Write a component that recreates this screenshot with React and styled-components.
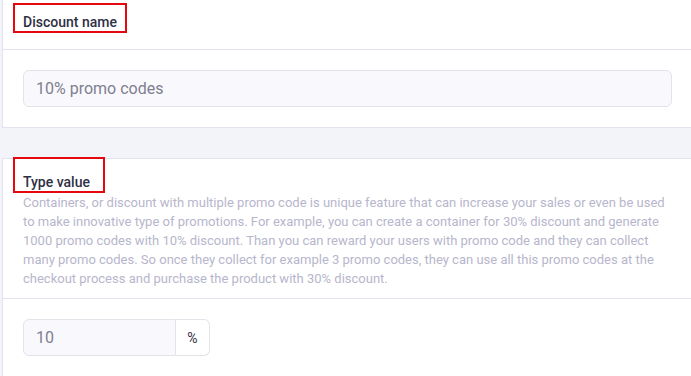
import styled, { createGlobalStyle } from "styled-components";

const GlobalStyle = createGlobalStyle`
  html, body {
    margin: 0;
    padding: 0;
    background: #f3f4f9;
    overflow: hidden;
  }
  body {
    font-family: Roboto, "Liberation Sans", sans-serif;
  }
`;

const Page = styled.div`
  display: flex;
  flex-direction: column;
  gap: 30px;
  padding-left: 2px;
  margin-right: -2px;
`;

const Card = styled.div`
  background: #fff;
  border: 1px solid #e3e3ef;
  border-top: ${(props) => (props.$open ? "none" : "1px solid #e3e3ef")};
`;

const CardHeader = styled.div`
  padding: ${(props) => props.$pad};
  border-bottom: 1px solid #e3e3ef;
`;

// red outline marks the annotated field titles
const Title = styled.h3`
  display: inline-block;
  margin: ${(props) => props.$offset} 0 0 -10px;
  padding: ${(props) => props.$top}px ${(props) => props.$right}px 1px 8px;
  border: 2px solid #e5090f;
  color: #2f3044;
  font-size: 14px;
  font-weight: 500;
  line-height: 16px;
`;

const Description = styled.p`
  margin: 0;
  color: #b7b6cc;
  font-size: 13px;
  line-height: 19px;
  max-width: 648px;
`;

const CardBody = styled.div`
  padding: 20px;
`;

const Input = styled.input`
  box-sizing: border-box;
  width: ${(props) => props.$width || "100%"};
  height: 37px;
  padding: 0 12px;
  border: 1px solid #e3e3ea;
  border-radius: ${(props) => (props.$grouped ? "6px 0 0 6px" : "6px")};
  background: #f9f9fd;
  color: #7e7f90;
  font-family: Roboto, "Liberation Sans", sans-serif;
  font-size: 16px;
  outline: none;

  &::placeholder {
    color: #7e7f90;
  }
`;

const Group = styled.div`
  display: flex;
  align-items: stretch;
`;

const Addon = styled.span`
  display: flex;
  align-items: center;
  justify-content: center;
  box-sizing: border-box;
  width: 34px;
  height: 37px;
  border: 1px solid #e3e3ea;
  border-left: none;
  border-radius: 0 6px 6px 0;
  background: #fff;
  color: #2f3044;
  font-size: 14px;
`;

export default function App() {
  return (
    <>
      <GlobalStyle />
      <Page>
        <Card $open>
          <CardHeader $pad="3px 20px 16px">
            <Title $offset="0" $top={9} $right={8}>
              Discount name
            </Title>
          </CardHeader>
          <CardBody>
            <Input placeholder="10% promo codes" />
          </CardBody>
        </Card>

        <Card>
          <CardHeader $pad="0 20px 10px">
            <Title $offset="-2px" $top={15} $right={13}>
              Type value
            </Title>
            <Description>
              Containers, or discount with multiple promo code is unique feature
              that can increase your sales or even be used to make innovative
              type of promotions. For example, you can create a container for
              30% discount and generate 1000 promo codes with 10% discount. Than
              you can reward your users with promo code and they can collect
              many promo codes. So once they collect for example 3 promo codes,
              they can use all this promo codes at the checkout process and
              purchase the product with 30% discount.
            </Description>
          </CardHeader>
          <CardBody>
            <Group>
              <Input $grouped $width="153px" defaultValue="10" />
              <Addon>%</Addon>
            </Group>
          </CardBody>
        </Card>
      </Page>
    </>
  );
}
